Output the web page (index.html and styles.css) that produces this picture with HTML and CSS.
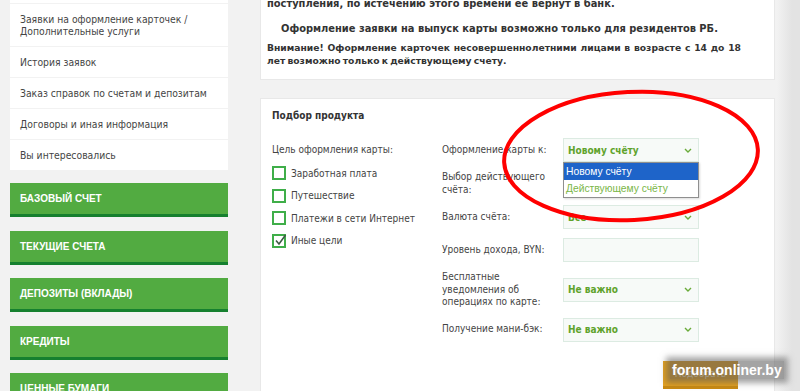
FILE: index.html
```html
<!DOCTYPE html>
<html lang="ru">
<head>
  <meta charset="UTF-8" />
  <meta name="viewport" content="width=device-width, initial-scale=1.0" />
  <title>Заявки на оформление карточек</title>
  <link rel="stylesheet" href="styles.css">
</head>
<body>
  <div class="page">
    <aside class="sidebar">
      <ul class="menu">
        <li class="menu-prev">Карточки</li>
        <li class="menu-wide">Заявки на оформление карточек / Дополнительные услуги</li>
        <li>История заявок</li>
        <li>Заказ справок по счетам и депозитам</li>
        <li>Договоры и иная информация</li>
        <li>Вы интересовались</li>
      </ul>
      <nav class="green-nav">
        <a href="#">Базовый счет</a>
        <a href="#">Текущие счета</a>
        <a href="#">Депозиты (вклады)</a>
        <a href="#">Кредиты</a>
        <a href="#">Ценные бумаги</a>
      </nav>
    </aside>

    <main class="content">
      <div class="card notice">
        <p class="first">поступления, по истечению этого времени ее вернут в банк.</p>
        <p class="indent">Оформление заявки на выпуск карты возможно только для резидентов РБ.</p>
        <p class="justify">Внимание! Оформление карточек несовершеннолетними лицами в возрасте с 14 до 18 лет возможно только к действующему счету.</p>
      </div>

      <div class="card picker">
        <h4>Подбор продукта</h4>
        <div class="picker-body">
          <div class="goals">
            <div class="goals-title">Цель оформления карты:</div>
            <label class="check"><span class="box"></span>Заработная плата</label>
            <label class="check"><span class="box"></span>Путешествие</label>
            <label class="check"><span class="box"></span>Платежи в сети Интернет</label>
            <label class="check"><span class="box checked"><svg width="13" height="13" viewBox="0 0 13 13"><path d="M2 6.5 L5 10 L11.5 1" fill="none" stroke="#3d5a44" stroke-width="1.6"/></svg></span>Иные цели</label>
          </div>

          <div class="fields">
            <div class="f-label">Оформление карты к:</div>
            <div class="f-control drop-wrap">
              <div class="select">Новому счёту<svg class="chev" width="8" height="5" viewBox="0 0 8 5"><path d="M1 1 L4 4 L7 1" fill="none" stroke="#6aab3a" stroke-width="1.4"/></svg></div>
              <ul class="dropdown">
                <li class="active">Новому счёту</li>
                <li>Действующему счёту</li>
              </ul>
            </div>

            <div class="f-label">Выбор действующего счёта:</div>
            <div class="f-control"></div>

            <div class="f-label">Валюта счёта:</div>
            <div class="f-control"><div class="select">Все<svg class="chev" width="8" height="5" viewBox="0 0 8 5"><path d="M1 1 L4 4 L7 1" fill="none" stroke="#6aab3a" stroke-width="1.4"/></svg></div></div>

            <div class="f-label">Уровень дохода, BYN:</div>
            <div class="f-control"><div class="input"></div></div>

            <div class="f-label">Бесплатные уведомления об операциях по карте:</div>
            <div class="f-control"><div class="select">Не важно<svg class="chev" width="8" height="5" viewBox="0 0 8 5"><path d="M1 1 L4 4 L7 1" fill="none" stroke="#6aab3a" stroke-width="1.4"/></svg></div></div>

            <div class="f-label">Получение мани-бэк:</div>
            <div class="f-control"><div class="select">Не важно<svg class="chev" width="8" height="5" viewBox="0 0 8 5"><path d="M1 1 L4 4 L7 1" fill="none" stroke="#6aab3a" stroke-width="1.4"/></svg></div></div>
          </div>
        </div>
        <div class="actions"><button class="pick-button">Подобрать</button></div>
      </div>
    </main>
  </div>

  <svg class="marker" width="800" height="391" viewBox="0 0 800 391">
    <ellipse cx="631" cy="156" rx="127" ry="64" transform="rotate(-3 631 156)" fill="none" stroke="#ff0000" stroke-width="4"/>
  </svg>
  <div class="watermark">forum.onliner.by</div>
</body>
</html>
```

FILE: styles.css
```css
body {
  margin: 0;
  height: 391px;
  overflow: hidden;
  font-family: "DejaVu Sans Condensed", "DejaVu Sans", sans-serif;
  font-size: 10px;
  color: #444;
  background: linear-gradient(to right, #f2f2f2 777px, #e3e3e3 792px);
}
.page {
  display: flex;
  gap: 32px;
  padding-left: 10px;
}
.sidebar {
  width: 218px;
  flex-shrink: 0;
}
.menu {
  list-style: none;
  margin: -27px 0 0;
  padding: 0;
  display: flex;
  flex-direction: column;
  gap: 1px;
}
.menu li {
  background: #fff;
  padding: 9px 10px;
  line-height: 12px;
  font-size: 10.3px;
}
.menu .menu-prev {
  height: 12px;
}
.green-nav {
  margin-top: 13px;
  display: flex;
  flex-direction: column;
  gap: 13.5px;
}
.green-nav a {
  display: block;
  height: 31px;
  line-height: 31px;
  padding-left: 10px;
  background: #52ab41;
  border-bottom: 3px solid #16802f;
  color: #fff;
  font-family: "Liberation Sans", Arial, sans-serif;
  font-size: 10px;
  font-weight: bold;
  text-transform: uppercase;
  text-decoration: none;
}
.content {
  width: 515px;
  flex-shrink: 0;
  margin-top: -4px;
}
.card {
  background: #fff;
  border: 1px solid #e8e8e8;
  box-sizing: border-box;
}
.notice {
  padding: 0 33px 12px 6px;
  color: #333;
  font-family: "DejaVu Sans", sans-serif;
  font-weight: bold;
  font-size: 9.9px;
  line-height: 13px;
}
.notice p {
  margin: 0;
}
.notice .indent {
  margin-top: 12px;
  text-indent: 14px;
}
.notice .justify {
  margin-top: 6px;
  text-align: justify;
  font-size: 9.2px;
  word-spacing: -1px;
}
.picker {
  margin-top: 18px;
  padding: 10px 0 40px 11px;
}
.picker h4 {
  margin: 0 0 15px;
  font-size: 10px;
  line-height: 14px;
  color: #333;
}
.picker-body {
  display: flex;
}
.goals {
  width: 170px;
  display: flex;
  flex-direction: column;
}
.goals-title {
  line-height: 24px;
  margin-bottom: 4px;
}
.check {
  display: flex;
  align-items: center;
  gap: 5px;
  height: 14px;
  margin-bottom: 8.5px;
}
.box {
  width: 10px;
  height: 10px;
  border: 2px solid #3fae49;
  position: relative;
}
.box svg {
  position: absolute;
  left: 0;
  top: -2px;
}
.fields {
  display: grid;
  grid-template-columns: 121px 136px;
  row-gap: 9px;
  align-items: center;
}
.f-label {
  line-height: 12.5px;
  padding-right: 8px;
}
.f-control {
  height: 24px;
}
.drop-wrap {
  position: relative;
}
.select, .input {
  height: 24px;
  box-sizing: border-box;
  border: 1px solid #dcebe2;
  background: #f7faf8;
}
.select {
  display: flex;
  align-items: center;
  justify-content: space-between;
  padding: 0 6px 0 4px;
  color: #5fa32c;
  font-weight: bold;
}
.dropdown {
  position: absolute;
  left: 0;
  top: 24px;
  width: 136px;
  box-sizing: border-box;
  margin: 0;
  padding: 0;
  list-style: none;
  background: #fff;
  border: 1px solid #8f8f8f;
  box-shadow: 1px 1px 2px rgba(0,0,0,0.15);
  font-family: "Liberation Sans", Arial, sans-serif;
  font-size: 10.3px;
  z-index: 2;
}
.dropdown li {
  height: 17px;
  line-height: 17px;
  padding-left: 2px;
  color: #7ab648;
}
.dropdown .active {
  background: #1e64c9;
  color: #fff;
}
.actions {
  display: flex;
  justify-content: flex-end;
  padding-right: 36px;
  margin-top: 19px;
}
.pick-button {
  width: 75px;
  height: 28px;
  border: none;
  border-bottom: 3px solid #c98a12;
  background: #e4a11f;
  color: #fbe6bf;
  font-family: "DejaVu Sans Condensed", sans-serif;
  font-size: 10px;
}
.marker {
  position: absolute;
  left: 0;
  top: 0;
  pointer-events: none;
  z-index: 3;
}
.watermark {
  position: absolute;
  left: 670px;
  top: 361px;
  padding: 1px 2px;
  font-family: "Liberation Sans", Arial, sans-serif;
  font-size: 14px;
  font-weight: bold;
  color: #fff;
  background: rgba(90, 90, 90, 0.55);
  box-shadow: 0 0 6px 4px rgba(90, 90, 90, 0.55);
  z-index: 4;
}
```
